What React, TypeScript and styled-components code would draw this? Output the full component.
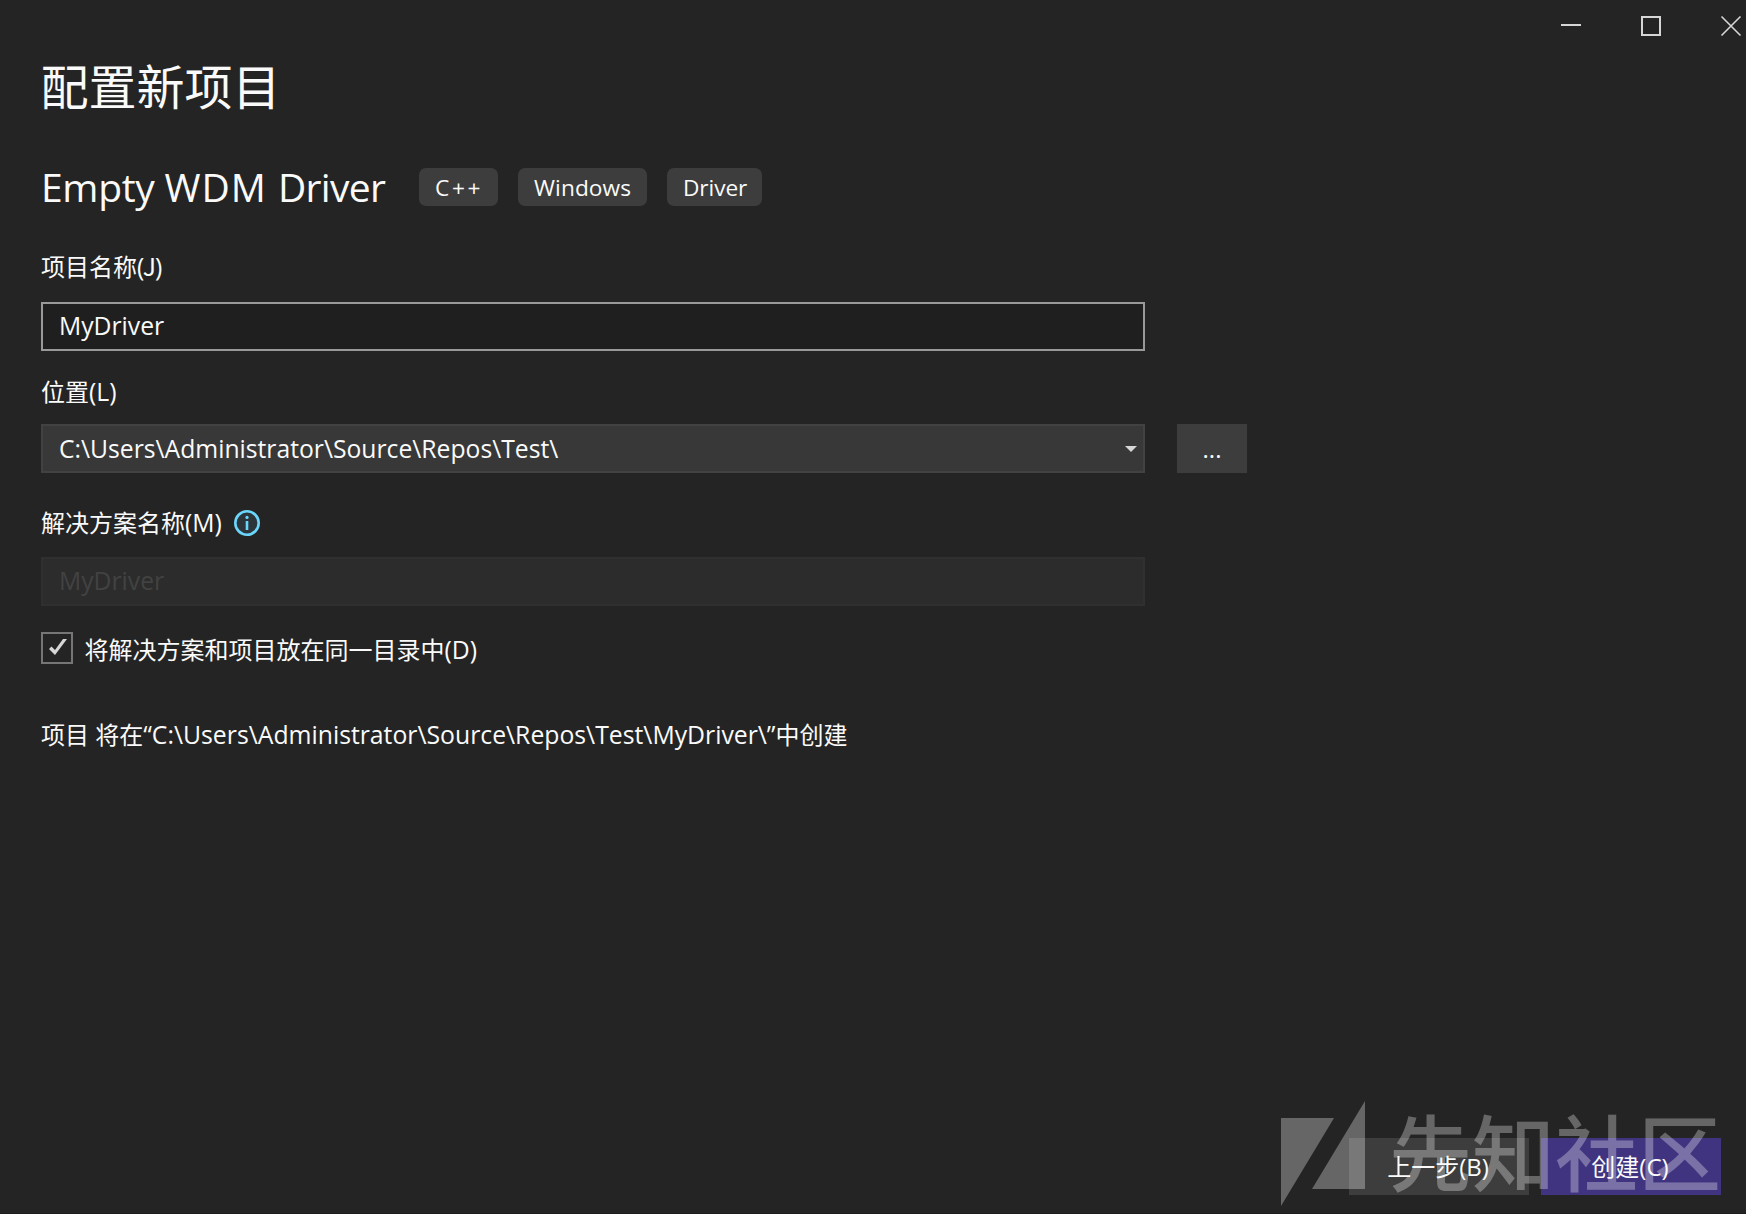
import React from "react";
import styled, { createGlobalStyle } from "styled-components";

const Global = createGlobalStyle`
  * { box-sizing: border-box; }
  html, body { margin: 0; background: #242424; }
  body {
    font-family: "Open Sans", "Noto Sans CJK SC", sans-serif;
    font-size: 24px;
    color: #fafafa;
    overflow: hidden;
  }
  button, input { font: inherit; color: inherit; }
`;

const Dialog = styled.main`
  position: relative;
  display: flex;
  flex-direction: column;
  width: 1746px;
  height: 1214px;
  background: #242424;
  box-shadow: inset 0 -1px 0 #1c1c1c;
`;

const TitleBar = styled.header`
  display: flex;
  justify-content: flex-end;
  height: 52px;
  flex: none;
  padding-right: 5px;
  gap: 60px;
`;

const WindowButton = styled.button`
  width: 20px;
  height: 52px;
  padding: 0;
  border: 0;
  background: none;
  display: flex;
  align-items: center;
  svg { display: block; overflow: visible; }
`;

const Body = styled.section`
  display: flex;
  flex-direction: column;
  flex: 1;
  padding: 0 41px;
`;

const Tracked = styled.span<{ $track?: number }>`
  letter-spacing: ${(p) => p.$track ?? 0}px;
  white-space: pre;
`;

const Latin = styled.span`
  font-size: 24.75px;
  line-height: 1;
`;

const Caption = styled.span`
  white-space: pre;
`;

const UprightJ = styled.span`
  font-family: "Noto Sans CJK SC", sans-serif;
  line-height: 1;
  margin-right: -1px;
  margin-left: -1.5px;
`;

const Heading = styled.h1`
  margin: -1px 0 0 -0.5px;
  height: 101px;
  line-height: 72px;
  font-size: 48px;
  font-weight: 400;
`;

const TemplateRow = styled.div`
  display: flex;
  align-items: center;
  height: 70px;
`;

const TemplateName = styled.h2`
  margin: 0;
  width: 378px;
  font-size: 39px;
  line-height: 54px;
  font-weight: 400;
`;

const Tags = styled.div`
  display: flex;
  gap: 20px;
`;

const Tag = styled.span<{ $width: number }>`
  width: ${(p) => p.$width}px;
  height: 38px;
  line-height: 39px;
  padding-left: 16px;
  border-radius: 7px;
  background: #3d3d3d;
  font-size: 22.7px;
`;

const Label = styled.label<{ $top: number; $bottom: number }>`
  display: flex;
  align-items: center;
  height: 34px;
  line-height: 34px;
  margin: ${(p) => p.$top}px 0 ${(p) => p.$bottom}px;
  gap: 12px;
`;

const FieldRow = styled.div`
  display: flex;
  gap: 32px;
`;

const Field = styled.div<{ $kind: "active" | "combo" | "disabled" }>`
  display: flex;
  align-items: center;
  justify-content: space-between;
  width: 1104px;
  height: 49px;
  padding: 0 6px 0 16px;
  border: 2px solid
    ${(p) => ({ active: "#999999", combo: "#424242", disabled: "#303030" })[p.$kind]};
  background: ${(p) => ({ active: "#1f1f1f", combo: "#383838", disabled: "#2c2c2c" })[p.$kind]};
  color: ${(p) => (p.$kind === "disabled" ? "#424242" : "#fafafa")};
`;

const FieldText = styled.span<{ $lift?: number }>`
  font-size: 24.7px;
  line-height: 34px;
  padding-bottom: ${(p) => p.$lift ?? 0}px;
`;

const Browse = styled.button`
  width: 70px;
  height: 49px;
  padding: 0;
  border: 0;
  background: #3d3d3d;
  line-height: 40px;
`;

const CheckRow = styled.label`
  display: flex;
  align-items: center;
  gap: 11.5px;
  height: 36px;
  margin-top: 24px;
`;

const CheckBox = styled.span`
  width: 32px;
  height: 32px;
  border: 2px solid #767676;
  display: flex;
  align-items: center;
  justify-content: center;
  svg { display: block; margin: -3px 0 0 2px; }
`;

const Summary = styled.p`
  margin: 52px 0 0;
  height: 34px;
  line-height: 34px;
`;

const Footer = styled.footer`
  display: flex;
  justify-content: flex-end;
  gap: 12px;
  padding: 0 25px 19px 0;
`;

const Action = styled.button<{ $primary?: boolean }>`
  width: 180px;
  height: 57px;
  padding: 0 2px 2px 0;
  border: 0;
  background: ${(p) => (p.$primary ? "#403480" : "#3d3d3d")};
`;

const ActionText = styled.span`
  position: relative;
  z-index: 2;
`;

const Watermark = styled.div`
  position: absolute;
  z-index: 1;
  left: 1281px;
  top: 1101px;
  display: flex;
  opacity: 0.3;
  color: #fff;
  pointer-events: none;
  svg { display: block; flex: none; }
`;

const WatermarkText = styled.span`
  margin: 6px 0 0 24px;
  font: 500 83px/84px "Noto Sans CJK SC", sans-serif;
  white-space: nowrap;
`;

const tags = [
  { text: "C++", width: 79, track: 2.6 },
  { text: "Windows", width: 129, track: 0.1 },
  { text: "Driver", width: 95, track: -0.1 },
];

export default function App() {
  return (
    <Dialog>
      <Global />
      <TitleBar>
        <WindowButton aria-label="最小化">
          <svg width="20" height="20"><path d="M0 9h20" stroke="#d6d6d6" strokeWidth="2" /></svg>
        </WindowButton>
        <WindowButton aria-label="最大化">
          <svg width="20" height="20"><rect x="1" y="1" width="18" height="18" fill="none" stroke="#d6d6d6" strokeWidth="2" /></svg>
        </WindowButton>
        <WindowButton aria-label="关闭">
          <svg width="20" height="20"><path d="M.5.5l19 19M19.5.5l-19 19" stroke="#d6d6d6" strokeWidth="1.6" /></svg>
        </WindowButton>
      </TitleBar>
      <Body>
        <Heading>配置新项目</Heading>
        <TemplateRow>
          <TemplateName>
            <Tracked $track={-0.3}>Empty </Tracked>
            <Tracked $track={1}>WDM </Tracked>
            <Tracked $track={-0.7}>Driver</Tracked>
          </TemplateName>
          <Tags>
            {tags.map((t) => (
              <Tag key={t.text} $width={t.width}><Tracked $track={t.track}>{t.text}</Tracked></Tag>
            ))}
          </Tags>
        </TemplateRow>
        <Label $top={28} $bottom={18}><Caption>项目名称<Latin>(<UprightJ>J</UprightJ>)</Latin></Caption></Label>
        <Field $kind="active"><FieldText $lift={1}>MyDriver</FieldText></Field>
        <Label $top={24} $bottom={15}><Caption>位置<Latin>(L)</Latin></Caption></Label>
        <FieldRow>
          <Field $kind="combo">
            <FieldText>C:\Users\Administrator\Source\Repos\Test\</FieldText>
            <svg width="12" height="6"><path d="M0 0h12L6 6z" fill="#d6d6d6" /></svg>
          </Field>
          <Browse>...</Browse>
        </FieldRow>
        <Label $top={33} $bottom={17}>
          <Caption>解决方案名称<Latin>(M)</Latin></Caption>
          <svg width="26" height="26">
            <circle cx="13" cy="13" r="11.7" fill="#2b353a" stroke="#6bd6fb" strokeWidth="2.6" />
            <path d="M13 11v9" stroke="#6bd6fb" strokeWidth="2.6" />
            <circle cx="13" cy="7.4" r="1.6" fill="#6bd6fb" />
          </svg>
        </Label>
        <Field $kind="disabled"><FieldText $lift={1}>MyDriver</FieldText></Field>
        <CheckRow>
          <CheckBox>
            <svg width="18" height="16" viewBox="0 0 18 16"><path d="M0 10L2.5 7.5L6 11L14 0H18L6 16Z" fill="#d6d6d6" /></svg>
          </CheckBox>
          <Caption>将解决方案和项目放在同一目录中<Latin>(D)</Latin></Caption>
        </CheckRow>
        <Summary>
          <Caption>项目 将在<Latin>“C:\Users\Administrator\Source\Repos\Test\MyDriver\”</Latin>中创建</Caption>
        </Summary>
      </Body>
      <Footer>
        <Action><ActionText>上一步(B)</ActionText></Action>
        <Action $primary><ActionText>创建(C)</ActionText></Action>
      </Footer>
      <Watermark>
        <svg width="84" height="105"><path d="M0 17H53L0 105ZM84 0V88H31Z" fill="#fff" /></svg>
        <WatermarkText>先知社区</WatermarkText>
      </Watermark>
    </Dialog>
  );
}
